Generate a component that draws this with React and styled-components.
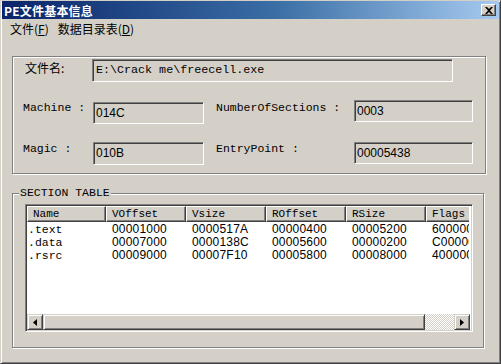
import styled, { createGlobalStyle } from "styled-components";

const GlobalStyle = createGlobalStyle`
  html, body {
    margin: 0;
    padding: 0;
    background: #d4d0c8;
  }
`;

const palette = {
  face: "#d4d0c8",
  shadow: "#808080",
  dark: "#404040",
  light: "#ffffff",
};

const mono = `"Liberation Mono", "Noto Sans CJK SC", monospace`;
const sans = `"Liberation Sans", "Noto Sans CJK SC", sans-serif`;
const cjk = `"Noto Sans CJK SC", "Liberation Sans", sans-serif`;

const sections = [
  { name: ".text", vOffset: "00001000", vSize: "0000517A", rOffset: "00000400", rSize: "00005200", flags: "60000020" },
  { name: ".data", vOffset: "00007000", vSize: "0000138C", rOffset: "00005600", rSize: "00000200", flags: "C0000040" },
  { name: ".rsrc", vOffset: "00009000", vSize: "00007F10", rOffset: "00005800", rSize: "00008000", flags: "40000040" },
];

const columns = [
  { key: "name", title: "Name", width: 79 },
  { key: "vOffset", title: "VOffset", width: 80 },
  { key: "vSize", title: "Vsize", width: 80 },
  { key: "rOffset", title: "ROffset", width: 80 },
  { key: "rSize", title: "RSize", width: 80 },
  { key: "flags", title: "Flags", width: 80 },
];

const App = () => {
  return (
    <>
      <GlobalStyle />
      <Window>
        <TitleBar>
          <Title>PE文件基本信息</Title>
          <CloseBtn>
            <svg width="8" height="7" viewBox="0 0 8 7">
              <path d="M0 0 L2 0 L4 2 L6 0 L8 0 L5 3.5 L8 7 L6 7 L4 5 L2 7 L0 7 L3 3.5 Z" fill="#000" />
            </svg>
          </CloseBtn>
        </TitleBar>
        <MenuBar>
          <MenuItem>文件(<u>F</u>)</MenuItem>
          <MenuItem>数据目录表(<u>D</u>)</MenuItem>
        </MenuBar>

        <InfoGroup>
          <FileRow>
            <FileLabel>文件名:</FileLabel>
            <Field $width={361} $height={23} $mono>E:\Crack me\freecell.exe</Field>
          </FileRow>
          <InfoGrid>
            <Label>Machine :</Label>
            <Field $width={111} $height={22} $offset={1}>014C</Field>
            <Label $indent>NumberOfSections :</Label>
            <Field $width={119} $height={22} $offset={-1}>0003</Field>
            <Label>Magic :</Label>
            <Field $width={111} $height={23}>010B</Field>
            <Label $indent>EntryPoint :</Label>
            <Field $width={119} $height={22}>00005438</Field>
          </InfoGrid>
        </InfoGroup>

        <SectionGroup>
          <Legend>SECTION TABLE</Legend>
          <ListView>
            <HeaderRow>
              {columns.map((c) => (
                <HeaderCell key={c.key} $width={c.width}>{c.title}</HeaderCell>
              ))}
            </HeaderRow>
            <ListBody>
              {sections.map((s) => (
                <Row key={s.name}>
                  {columns.map((c) => (
                    <Cell key={c.key} $width={c.width} $mono={c.key === "name"}>
                      {s[c.key]}
                    </Cell>
                  ))}
                </Row>
              ))}
            </ListBody>
            <ScrollBar>
              <ArrowBtn>
                <svg width="4" height="7" viewBox="0 0 4 7">
                  <path d="M4 0 L4 7 L0 3.5 Z" fill="#000" />
                </svg>
              </ArrowBtn>
              <Thumb />
              <Track />
              <ArrowBtn>
                <svg width="4" height="7" viewBox="0 0 4 7">
                  <path d="M0 0 L0 7 L4 3.5 Z" fill="#000" />
                </svg>
              </ArrowBtn>
            </ScrollBar>
          </ListView>
        </SectionGroup>
      </Window>
    </>
  );
};

const Window = styled.div`
  width: 501px;
  height: 364px;
  box-sizing: border-box;
  display: flex;
  flex-direction: column;
  background: ${palette.face};
  border: 1px solid;
  border-color: ${palette.face} ${palette.dark} ${palette.dark} ${palette.face};
  box-shadow: inset 1px 1px 0 ${palette.light}, inset -1px -1px 0 ${palette.shadow};
  padding: 0 1px 1px 1px;
  overflow: hidden;
`;

const TitleBar = styled.div`
  height: 18px;
  display: flex;
  align-items: center;
  justify-content: space-between;
  padding: 0 3px 0 2px;
  background: linear-gradient(to right, #0a246a 0%, #3a6ea5 55%, #a6caf0 100%);
`;

const Title = styled.div`
  font-family: ${cjk};
  font-weight: bold;
  font-size: 12px;
  color: #ffffff;
  letter-spacing: 0.2px;
`;

const CloseBtn = styled.div`
  width: 15px;
  height: 12px;
  box-sizing: border-box;
  display: flex;
  align-items: center;
  justify-content: center;
  background: ${palette.face};
  border-top: 1px solid ${palette.light};
  border-left: 1px solid ${palette.light};
  border-right: 1px solid ${palette.dark};
  border-bottom: 1px solid ${palette.dark};
  box-shadow: inset -1px -1px 0 ${palette.shadow};
`;

const MenuBar = styled.div`
  height: 20px;
  display: flex;
  align-items: center;
  gap: 9px;
  padding-left: 8px;
`;

const MenuItem = styled.div`
  font-family: ${cjk};
  font-size: 12px;
  color: #000;
  line-height: 14px;

  u {
    text-underline-offset: 1px;
  }
`;

const InfoGroup = styled.div`
  margin: 17px 13px 0 10px;
  height: 118px;
  box-sizing: border-box;
  border: 1px solid ${palette.shadow};
  box-shadow: 1px 1px 0 ${palette.light}, inset 1px 1px 0 ${palette.light};
  padding: 2px 0 0 10px;
`;

const FileRow = styled.div`
  display: flex;
  align-items: flex-start;
  padding-left: 2px;
`;

const FileLabel = styled.div`
  width: 67px;
  font-family: ${cjk};
  font-size: 12px;
  line-height: 14px;
  padding-top: 2px;
`;

const InfoGrid = styled.div`
  display: grid;
  grid-template-columns: 70px 111px 150px 119px;
  row-gap: 18px;
  margin-top: 19px;
`;

const Label = styled.div`
  padding-left: ${(p) => (p.$indent ? "12px" : "0")};
  font-family: ${mono};
  font-size: 11.5px;
  line-height: 14px;
  color: #000;
  white-space: pre;
`;

const Field = styled.div`
  width: ${(p) => p.$width}px;
  height: ${(p) => p.$height}px;
  margin-top: ${(p) => p.$offset || 0}px;
  box-sizing: border-box;
  background: ${palette.face};
  border-top: 1px solid ${palette.shadow};
  border-left: 1px solid ${palette.shadow};
  border-right: 1px solid ${palette.light};
  border-bottom: 1px solid ${palette.light};
  box-shadow: inset 1px 1px 0 ${palette.dark};
  padding: ${(p) => (p.$mono ? "3px 0 0 3px" : "3px 0 0 2px")};
  font-family: ${(p) => (p.$mono ? mono : sans)};
  font-size: ${(p) => (p.$mono ? "11.7px" : "12px")};
  line-height: 14px;
  color: #000;
  white-space: pre;
  overflow: hidden;
`;

const SectionGroup = styled.div`
  position: relative;
  margin: 19px 15px 0 10px;
  height: 155px;
  box-sizing: border-box;
  border: 1px solid ${palette.shadow};
  box-shadow: 1px 1px 0 ${palette.light}, inset 1px 1px 0 ${palette.light};
  padding: 10px 10px 15px 12px;
  display: flex;
`;

const Legend = styled.div`
  position: absolute;
  top: -8px;
  left: 6px;
  padding: 0 1px;
  background: ${palette.face};
  font-family: ${mono};
  font-size: 11.5px;
  line-height: 14px;
  color: #000;
`;

const ListView = styled.div`
  flex: 1;
  display: flex;
  flex-direction: column;
  box-sizing: border-box;
  background: #ffffff;
  border-top: 1px solid ${palette.shadow};
  border-left: 1px solid ${palette.shadow};
  border-right: 1px solid ${palette.light};
  border-bottom: 1px solid ${palette.light};
  box-shadow: inset 1px 1px 0 ${palette.dark}, inset -1px -1px 0 ${palette.face};
  padding: 1px 1px 1px 1px;
  overflow: hidden;
`;

const HeaderRow = styled.div`
  display: flex;
  height: 16px;
  flex-shrink: 0;
  overflow: hidden;
  background: ${palette.face};
  margin-right: 2px;
`;

const HeaderCell = styled.div`
  flex: 0 0 ${(p) => p.$width}px;
  box-sizing: border-box;
  height: 16px;
  border-top: 1px solid ${palette.light};
  border-left: 1px solid ${palette.light};
  border-right: 1px solid ${palette.dark};
  border-bottom: 1px solid ${palette.dark};
  box-shadow: inset -1px -1px 0 ${palette.shadow};
  padding: 1px 0 0 5px;
  font-family: ${mono};
  font-size: 11px;
  line-height: 13px;
  color: #000;
`;

const ListBody = styled.div`
  flex: 1;
  padding-top: 1px;
  overflow: hidden;
  margin-right: 2px;
`;

const Row = styled.div`
  display: flex;
  height: 13px;
`;

const Cell = styled.div`
  flex: 0 0 ${(p) => p.$width}px;
  box-sizing: border-box;
  padding-left: ${(p) => (p.$mono ? "1px" : "6px")};
  font-family: ${(p) => (p.$mono ? mono : sans)};
  font-size: ${(p) => (p.$mono ? "11.5px" : "12px")};
  letter-spacing: ${(p) => (p.$mono ? "0" : "0.2px")};
  line-height: 13px;
  color: #000;
  white-space: pre;
  overflow: hidden;
`;

const ScrollBar = styled.div`
  display: flex;
  height: 16px;
  flex-shrink: 0;
  margin-right: 1px;
`;

const ArrowBtn = styled.div`
  width: 16px;
  height: 16px;
  box-sizing: border-box;
  display: flex;
  align-items: center;
  justify-content: center;
  background: ${palette.face};
  border-top: 1px solid ${palette.face};
  border-left: 1px solid ${palette.face};
  border-right: 1px solid ${palette.dark};
  border-bottom: 1px solid ${palette.dark};
  box-shadow: inset 1px 1px 0 ${palette.light}, inset -1px -1px 0 ${palette.shadow};
`;

const Thumb = styled.div`
  width: 382px;
  height: 16px;
  box-sizing: border-box;
  background: ${palette.face};
  border-top: 1px solid ${palette.face};
  border-left: 1px solid ${palette.face};
  border-right: 1px solid ${palette.dark};
  border-bottom: 1px solid ${palette.dark};
  box-shadow: inset 1px 1px 0 ${palette.light}, inset -1px -1px 0 ${palette.shadow};
`;

const Track = styled.div`
  flex: 1;
  height: 16px;
  background: repeating-conic-gradient(#ffffff 0 25%, ${palette.face} 0 50%) 0 0 / 2px 2px;
`;

export default App;
